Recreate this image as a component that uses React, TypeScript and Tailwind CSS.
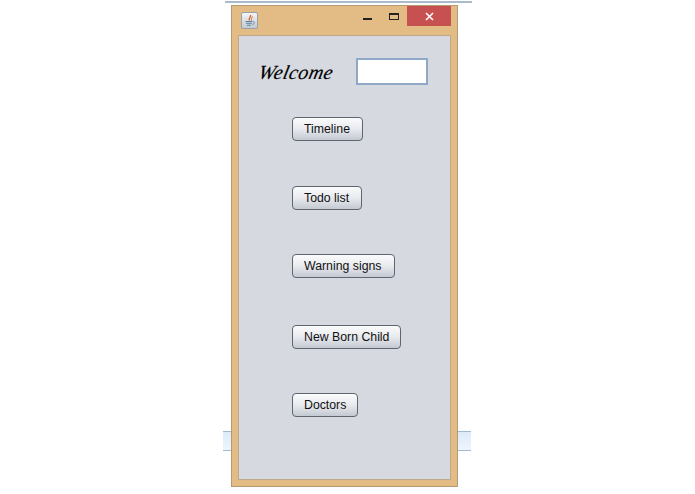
const buttons = [
  { label: "Timeline", cls: "w-[71px] mt-[32px]" },
  { label: "Todo list", cls: "w-[70px] mt-[45px]" },
  { label: "Warning signs", cls: "w-[103px] mt-[44px]" },
  { label: "New Born Child", cls: "w-[109px] mt-[47px]" },
  { label: "Doctors", cls: "w-[66px] mt-[44px]" },
];

function JavaIcon() {
  return (
    <div className="w-[17px] h-[17px] rounded-[2px] border border-[#9aa0a6] bg-gradient-to-b from-[#f4f5f6] to-[#c3cad2] flex items-center justify-center">
      <svg width="13" height="13" viewBox="0 0 13 13" fill="none">
        <path d="M7.5 1 C8.5 3 5 4 6.5 6.5" stroke="#d8642a" strokeWidth="1.4" />
        <path d="M9.5 2.5 C9 4 8 4.5 8.5 6.5" stroke="#d8642a" strokeWidth="1" />
        <path d="M2.5 7.5 H9.5 M3 9.3 H9 M4 11.2 H8" stroke="#5c7f9f" strokeWidth="1.1" />
        <path d="M10 7.5 C12 7.5 12 10 9.5 10.5" stroke="#5c7f9f" strokeWidth="0.9" />
      </svg>
    </div>
  );
}

export default function App() {
  return (
    <div className="relative w-[695px] h-[494px] bg-white overflow-hidden font-['Liberation_Sans',sans-serif]">
      <div className="absolute left-[225px] top-[1px] w-[247px] h-[2px] bg-[#a9bbcd]" />
      <div className="absolute left-[223px] top-[431px] w-[248px] h-[20px] border-y border-[#9dbbd6] bg-gradient-to-b from-[#dcebfa] to-[#eef5fc]" />

      <div className="absolute left-[231px] top-[5px] w-[227px] h-[482px] bg-[#e3bb85] border border-[#b59a73] flex flex-col">
        <div className="h-[29px] flex items-start shrink-0">
          <div className="ml-[9px] mt-[6px]">
            <JavaIcon />
          </div>
          <div className="ml-auto flex items-start">
            <div className="w-[9px] h-[2px] bg-[#222] mt-[12px] mr-[17px]" />
            <div className="w-[10px] h-[7px] border border-[#222] border-t-2 mt-[7px] mr-[8px]" />
            <div className="w-[44px] h-[20px] bg-[#c75050] flex items-center justify-center mr-[6px]">
              <svg width="9" height="9" viewBox="0 0 9 9">
                <path d="M1 1 L8 8 M8 1 L1 8" stroke="#fff" strokeWidth="1.6" />
              </svg>
            </div>
          </div>
        </div>

        <div className="mx-[6px] h-[445px] bg-[#d6d9e0] border border-[#bda98c] flex flex-col">
          <div className="flex items-center mt-[22px] h-[27px]">
            <span className="ml-[20px] w-[97px] text-[#000] text-[20px] tracking-[0.4px] font-['Liberation_Serif',serif] italic leading-none -skew-x-12 [-webkit-text-stroke:0.15px_#000]">
              Welcome
            </span>
            <div className="w-[72px] h-[27px] bg-white border-2 border-[#8ea8c6]" />
          </div>

          <div className="flex flex-col items-start ml-[53px]">
            {buttons.map((b) => (
              <div
                key={b.label}
                className={`${b.cls} h-[24px] flex items-center pl-[11px] pt-[1px] rounded-[4px] border border-[#5f6670] bg-gradient-to-b from-[#fbfbfc] via-[#e8eaee] to-[#c4c9d2] text-[12.3px] text-[#111] whitespace-nowrap`}
              >
                {b.label}
              </div>
            ))}
          </div>
        </div>
      </div>
    </div>
  );
}
